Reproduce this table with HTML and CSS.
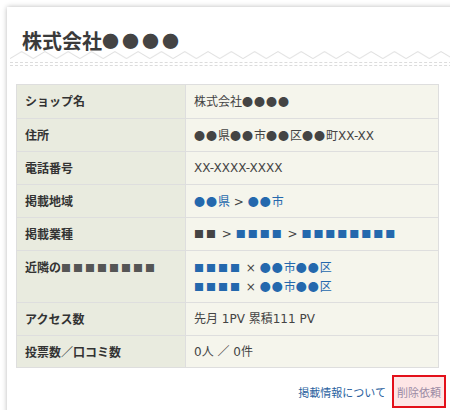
FILE: index.html
```html
<!DOCTYPE html>
<html lang="ja">
<head>
<meta charset="utf-8">
<link rel="stylesheet" href="styles.css">
</head>
<body>
<div class="card">
  <h1 class="title">株式会社<span class="tdots">●●●●</span></h1>
  <svg class="zigzag" width="440" height="10" viewBox="0 0 440 10">
    <defs>
      <pattern id="zz" x="0" y="0" width="23.3" height="10" patternUnits="userSpaceOnUse">
        <polyline points="0,8.5 11.65,1.5 23.3,8.5" fill="none" stroke="#e0e0e0" stroke-width="1"/>
      </pattern>
    </defs>
    <rect x="0" y="0" width="440" height="10" fill="url(#zz)"/>
  </svg>
  <div class="rule"></div>

  <table class="info">
    <tr><th>ショップ名</th><td>株式会社<span class="d">●●●●</span></td></tr>
    <tr><th>住所</th><td><span class="d">●●</span>県<span class="d">●●</span>市<span class="d">●●</span>区<span class="d">●●</span>町XX-XX</td></tr>
    <tr><th>電話番号</th><td>XX-XXXX-XXXX</td></tr>
    <tr><th>掲載地域</th><td><span class="link"><span class="d">●●</span>県</span> &gt; <span class="link"><span class="d">●●</span>市</span></td></tr>
    <tr><th>掲載業種</th><td><span class="sq">■■</span> &gt; <span class="link sq">■■■■</span> &gt; <span class="link sq">■■■■■■■■</span></td></tr>
    <tr class="tall"><th>近隣の<span class="sq dark">■■■■■■■■</span></th><td><span class="link sq">■■■■</span> × <span class="link"><span class="d">●●</span>市<span class="d">●●</span>区</span><br><span class="link sq">■■■■</span> × <span class="link"><span class="d">●●</span>市<span class="d">●●</span>区</span></td></tr>
    <tr><th>アクセス数</th><td>先月 1PV 累積111 PV</td></tr>
    <tr><th>投票数／口コミ数</th><td>0人 ／ 0件</td></tr>
  </table>

  <div class="footer">
    <span class="about">掲載情報について</span>
    <span class="delete">削除依頼</span>
  </div>
</div>
</body>
</html>
```

FILE: styles.css
```css
html, body {
  margin: 0;
  padding: 0;
  background: #ffffff;
  overflow: hidden;
}
body {
  width: 450px;
  height: 410px;
  font-family: "Noto Sans CJK JP", "Noto Sans", sans-serif;
  color: #444;
}
.card {
  margin: 7px 0 0 7px;
  width: 470px;
  height: 430px;
  background: #fff;
  box-shadow: 0 0 5px rgba(0, 0, 0, 0.28);
  padding-top: 23px;
  box-sizing: border-box;
}
.title {
  margin: 0 0 0 15px;
  font-size: 20px;
  line-height: 22px;
  font-weight: bold;
  color: #3a3a3a;
}
.tdots {
  font-size: 17px;
  letter-spacing: 3px;
  color: #444;
  vertical-align: 1px;
}
.zigzag {
  display: block;
  margin: -2px 0 0 3px;
}
.rule {
  margin: 2px 0 0 3px;
  height: 2px;
  border-top: 1px dashed #dcdcdc;
  border-bottom: 1px dashed #dcdcdc;
}
.info {
  margin: 18px 0 0 9px;
  width: 423px;
  border-collapse: collapse;
  font-size: 12px;
  line-height: 18px;
}
.info th, .info td {
  border: 1px solid #dedede;
  padding: 7px 8px 6.5px;
  text-align: left;
  vertical-align: top;
}
.info th {
  width: 152px;
  background: #e9ebdf;
  color: #333;
  font-weight: bold;
}
.info td {
  background: #f5f5ec;
  color: #444;
  font-family: "DejaVu Sans", "Noto Sans CJK JP", sans-serif;
}
.info td .d, .info td .sq {
  font-family: "Noto Sans CJK JP", sans-serif;
}
.d {
  font-size: 11px;
  letter-spacing: 1px;
}
.link {
  color: #2468ad;
}
.sq {
  font-size: 10px;
  letter-spacing: 2px;
}
.sq.dark {
  color: #555;
  font-size: 10px;
}
.footer {
  width: 430px;
  margin: 7px 0 0 9px;
  display: flex;
  justify-content: flex-end;
  align-items: center;
  gap: 6px;
  font-size: 11px;
}
.about {
  color: #2a5f9e;
}
.delete {
  display: flex;
  align-items: center;
  height: 29px;
  padding: 0 3px;
  border: 2px solid #e3101a;
  background: #fde6e6;
  color: #9a8aa4;
}
```
